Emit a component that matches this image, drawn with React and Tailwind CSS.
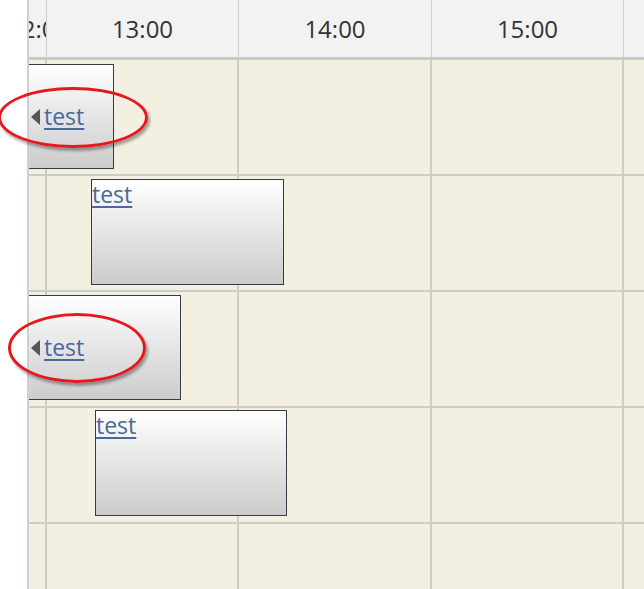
// Timeline scheduler view, scrolled to 13:00
const hours = [
  { label: '12:00', w: 'w-[18px]', first: true },
  { label: '13:00', w: 'w-[192px]' },
  { label: '14:00', w: 'w-[193px]' },
  { label: '15:00', w: 'w-[192px]' },
  { label: '16:00', w: 'w-[193px]' },
];

const Triangle = () => (
  <span className="inline-block w-0 h-0 border-y-[8px] border-y-transparent border-r-[9px] border-r-[#555]" />
);

const Ellipse = ({ className }) => (
  <div
    className={`absolute rounded-[50%] border-[3px] border-[#e8171d] shadow-[2px_3px_3px_rgba(0,0,0,0.35)] pointer-events-none ${className}`}
  />
);

export default function App() {
  return (
    <div
      className="relative flex w-[644px] h-[589px] overflow-hidden bg-white"
      style={{ fontFamily: '"Open Sans", "Noto Sans", sans-serif' }}
    >
      <div className="w-[27px] shrink-0 bg-white" />

      <div className="relative flex-1 overflow-hidden border-l-2 border-[#cfcfcf]">
        {/* header */}
        <div className="flex h-[60px] bg-[#f2f2f2] border-b-[3px] border-[#c9c9c9]">
          {hours.map((h) => (
            <div
              key={h.label}
              className={`${h.w} shrink-0 flex items-center overflow-hidden border-r border-[#cccccc] text-[24px] text-[#333] whitespace-nowrap ${h.first ? '' : 'justify-center'}`}
            >
              <span className={h.first ? '-ml-[21px]' : ''}>{h.label}</span>
            </div>
          ))}
        </div>

        {/* body grid */}
        <div className="bg-[#f4f0e1]">
          {[0, 1, 2, 3, 4].map((r) => (
            <div key={r} className="flex h-[116px] border-b-2 border-[#cccccc]">
              {hours.map((h) => (
                <div key={h.label} className={`${h.w} shrink-0 border-r-2 border-[#cccccc]`} />
              ))}
            </div>
          ))}
        </div>

        {/* events */}
        <div className="absolute left-[-40px] top-[64px] w-[125px] h-[105px] border border-[#353a46] bg-gradient-to-b from-white to-[#cccccc] flex items-center pl-[41px]">
          <Triangle />
          <a href="#" className="ml-[4px] text-[23px] leading-none text-[#4b679b] underline underline-offset-[3px]">test</a>
        </div>

        <div className="absolute left-[62px] top-[179px] w-[193px] h-[106px] border border-[#353a46] bg-gradient-to-b from-white to-[#cccccc]">
          <a href="#" className="block text-[23px] leading-[28px] text-[#4b679b] underline underline-offset-[3px]">test</a>
        </div>

        <div className="absolute left-[-40px] top-[295px] w-[192px] h-[105px] border border-[#353a46] bg-gradient-to-b from-white to-[#cccccc] flex items-center pl-[41px]">
          <Triangle />
          <a href="#" className="ml-[4px] text-[23px] leading-none text-[#4b679b] underline underline-offset-[3px]">test</a>
        </div>

        <div className="absolute left-[66px] top-[410px] w-[192px] h-[106px] border border-[#353a46] bg-gradient-to-b from-white to-[#cccccc]">
          <a href="#" className="block text-[23px] leading-[28px] text-[#4b679b] underline underline-offset-[3px]">test</a>
        </div>
      </div>

      {/* annotations */}
      <Ellipse className="left-[-2px] top-[87px] w-[150px] h-[61px]" />
      <Ellipse className="left-[8px] top-[313px] w-[138px] h-[70px]" />
    </div>
  );
}
